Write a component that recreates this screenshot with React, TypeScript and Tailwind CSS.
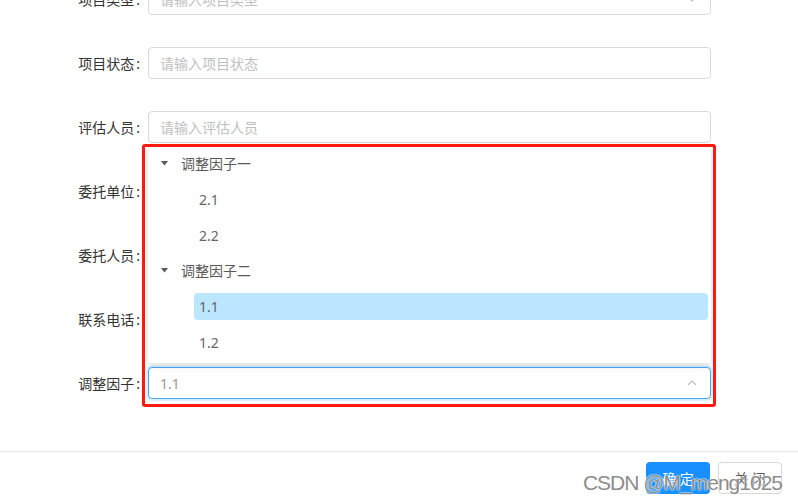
import React from "react";

const cjk = "font-['Noto_Sans','Noto_Sans_CJK_SC',sans-serif]";

const ChevronDown = () => (
  <svg width="12" height="12" viewBox="0 0 12 12" fill="none" stroke="#bfbfbf" strokeWidth="1.2">
    <polyline points="2,4 6,8 10,4" />
  </svg>
);

const ChevronUp = () => (
  <svg width="12" height="12" viewBox="0 0 12 12" fill="none" stroke="#bfbfbf" strokeWidth="1.2">
    <polyline points="2,8 6,4 10,8" />
  </svg>
);

const Caret = () => (
  <svg width="7" height="5" viewBox="0 0 7 5">
    <polygon points="0,0 7,0 3.5,4.5" fill="#595959" />
  </svg>
);

const Label = ({ text }: { text: string }) => (
  <div className="flex h-8 w-[148px] shrink-0 items-center justify-end text-[14px] text-[#333]">
    {text}
    <span className="ml-[2px] mr-2">:</span>
  </div>
);

const TextInput = ({ placeholder, select }: { placeholder: string; select?: boolean }) => (
  <div className="flex h-8 flex-1 items-center justify-between rounded border border-[#d9d9d9] bg-white pl-[11px] pr-[12px] text-[14px] text-[#bfbfbf]">
    <span>{placeholder}</span>
    {select && <ChevronDown />}
  </div>
);

const parents = [
  { name: "调整因子一", items: ["2.1", "2.2"] },
  { name: "调整因子二", items: ["1.1", "1.2"] },
];

const TreeDropdown = () => (
  <div className="absolute bottom-[calc(100%+4px)] left-0 right-0 rounded bg-white pb-[3px] shadow-[0_2px_8px_rgba(0,0,0,0.15)]">
    {parents.map((p) => (
      <div key={p.name}>
        <div className="flex h-[35.7px] items-center pl-[13px] text-[14px] text-[#595959]">
          <Caret />
          <span className="ml-[13px]">{p.name}</span>
        </div>
        {p.items.map((item) => (
          <div key={item} className="flex h-[35.7px] items-center pl-[46px] pr-[3px]">
            <div
              className={
                "flex h-[27px] flex-1 items-center rounded-sm pl-[5px] text-[14px] text-[#666] " +
                (item === "1.1" ? "bg-[#bae7ff]" : "")
              }
            >
              {item}
            </div>
          </div>
        ))}
      </div>
    ))}
  </div>
);

export default function App() {
  const rows = [
    { label: "项目类型", placeholder: "请输入项目类型", select: true },
    { label: "项目状态", placeholder: "请输入项目状态" },
    { label: "评估人员", placeholder: "请输入评估人员" },
    { label: "委托单位", placeholder: "请输入委托单位" },
    { label: "委托人员", placeholder: "请输入委托人员" },
    { label: "联系电话", placeholder: "请输入联系电话" },
  ];

  return (
    <div className={`relative h-[503px] w-[798px] overflow-hidden bg-white ${cjk}`}>
      <div className="-mt-[17px] flex w-[711px] flex-col gap-8">
        {rows.map((r) => (
          <div key={r.label} className="flex items-center">
            <Label text={r.label} />
            <TextInput placeholder={r.placeholder} select={r.select} />
          </div>
        ))}
        <div className="flex items-center">
          <Label text="调整因子" />
          <div className="relative flex-1">
            <div className="flex h-8 items-center justify-between rounded border border-[#40a9ff] bg-white pl-[11px] pr-[12px] text-[14px] text-[#999] shadow-[0_0_0_2px_rgba(24,144,255,0.15)]">
              <span>1.1</span>
              <ChevronUp />
            </div>
            <TreeDropdown />
            <div className="pointer-events-none absolute -bottom-[8px] -left-[6px] -right-[5px] -top-[223px] rounded-[3px] border-[3px] border-[#ff1a0f]" />
          </div>
        </div>
      </div>

      <div className="mt-[52px] flex justify-end gap-2 border-t border-[#e8e8e8] pr-4 pt-[10px]">
        <button className="h-8 w-16 rounded bg-[#1890ff] text-[14px] text-white">确 定</button>
        <button className="h-8 w-16 rounded border border-[#d9d9d9] bg-white text-[14px] text-[#595959]">关 闭</button>
      </div>

      <div className="pointer-events-none absolute bottom-[5px] right-[16px] font-['Liberation_Sans',sans-serif] text-[21px] tracking-[-1px] text-[#8c8c8c] [text-shadow:0_0_2px_#fff,0_0_2px_#fff]">
        CSDN @M_meng1025
      </div>
    </div>
  );
}
